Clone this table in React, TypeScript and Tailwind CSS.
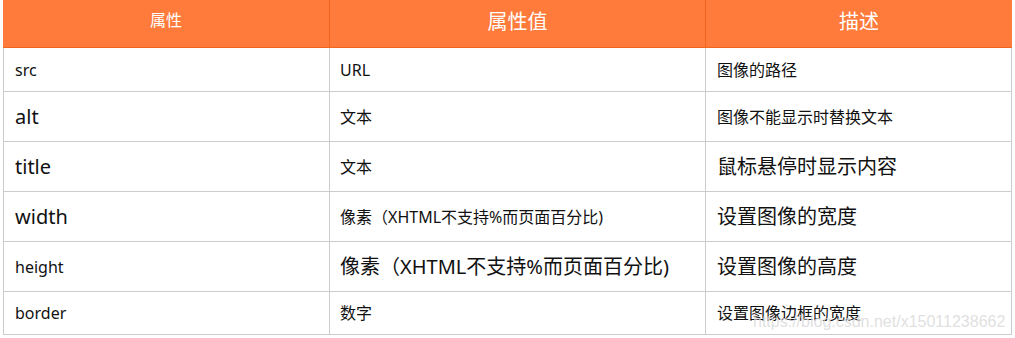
const rows = [
  { name: 'src', nameSize: 'text-[16px]', value: 'URL', valueSize: 'text-[16px]', desc: '图像的路径', descSize: 'text-[16px]', h: 'h-[44px]' },
  { name: 'alt', nameSize: 'text-[20px]', value: '文本', valueSize: 'text-[16px]', desc: '图像不能显示时替换文本', descSize: 'text-[16px]', h: 'h-[50px]' },
  { name: 'title', nameSize: 'text-[20px]', value: '文本', valueSize: 'text-[16px]', desc: '鼠标悬停时显示内容', descSize: 'text-[20px]', h: 'h-[50px]' },
  { name: 'width', nameSize: 'text-[20px]', value: '像素（XHTML不支持%而页面百分比)', valueSize: 'text-[16px]', desc: '设置图像的宽度', descSize: 'text-[20px]', h: 'h-[50px]' },
  { name: 'height', nameSize: 'text-[16px]', value: '像素（XHTML不支持%而页面百分比)', valueSize: 'text-[20px]', desc: '设置图像的高度', descSize: 'text-[20px]', h: 'h-[50px]' },
  { name: 'border', nameSize: 'text-[16px]', value: '数字', valueSize: 'text-[16px]', desc: '设置图像边框的宽度', descSize: 'text-[16px]', h: 'h-[43px]' },
];

export default function App() {
  return (
    <div className="relative w-[1015px] h-[338px] bg-white overflow-hidden font-['Noto_Sans','Noto_Sans_CJK_SC',sans-serif] text-[#111]">
      <div className="ml-[3px] w-[1009px]">
        {/* Header */}
        <div className="flex h-[48px] bg-[#fe7b3b] text-white border-b border-[#f0661f]">
          <div className="w-[327px] flex items-center justify-center pb-[7px] text-[16px] border-r border-[#f0661f]">属性</div>
          <div className="w-[376px] flex items-center justify-center pb-[3px] text-[20px] border-r border-[#f0661f]">属性值</div>
          <div className="w-[306px] flex items-center justify-center pb-[3px] text-[20px]">描述</div>
        </div>

        {/* Body */}
        {rows.map((r) => (
          <div key={r.name} className={`flex ${r.h} border-b border-[#cccccc]`}>
            <div className={`w-[327px] flex items-center pl-[11px] border-l border-r border-[#cccccc] ${r.nameSize}`}>{r.name}</div>
            <div className={`w-[376px] flex items-center pl-[10px] border-r border-[#cccccc] ${r.valueSize}`}>{r.value}</div>
            <div className={`w-[306px] flex items-center pl-[11px] border-r border-[#cccccc] ${r.descSize}`}>{r.desc}</div>
          </div>
        ))}
      </div>

      {/* Watermark */}
      <div className="absolute left-[753px] top-[312px] text-[16px] leading-[20px] text-[#d8d8d8]/80 font-['Liberation_Sans',Arial,sans-serif] pointer-events-none">
        https://blog.csdn.net/x15011238662
      </div>
    </div>
  );
}
